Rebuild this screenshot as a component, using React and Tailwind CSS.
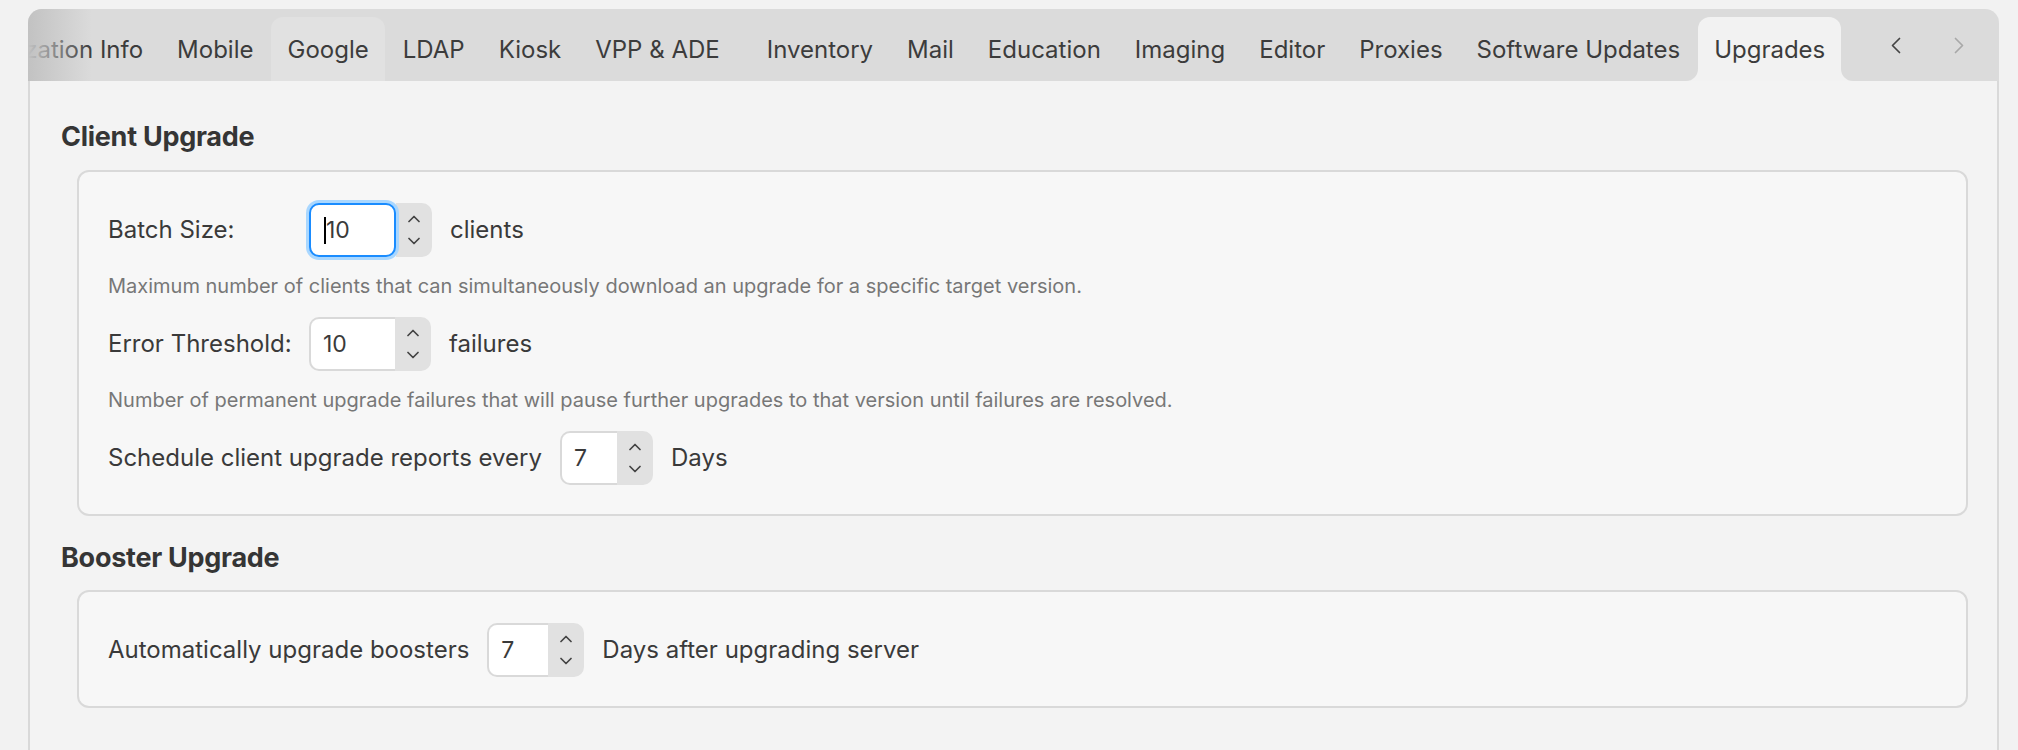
import React from "react";

const TABS = [
  "Organization Info",
  "Mobile",
  "Google",
  "LDAP",
  "Kiosk",
  "VPP & ADE",
  "Inventory",
  "Mail",
  "Education",
  "Imaging",
  "Editor",
  "Proxies",
  "Software Updates",
  "Upgrades",
];

function Chevron({ dir, className }) {
  const d = dir === "up" ? "M1 6.5 6 1.5 11 6.5" : "M1 1.5 6 6.5 11 1.5";
  return (
    <svg width="12" height="8" viewBox="0 0 12 8" fill="none" className={className}>
      <path d={d} stroke="currentColor" strokeWidth="1.7" strokeLinecap="round" strokeLinejoin="round" />
    </svg>
  );
}

function Stepper() {
  return (
    <div className="flex w-[36px] flex-col items-center justify-center gap-[14px] rounded-r-[10px] bg-[#e1e1e1] text-[#444]">
      <Chevron dir="up" />
      <Chevron dir="down" />
    </div>
  );
}

function NumberInput({ value, boxClass, focused }) {
  if (focused) {
    return (
      <div className="flex h-[54px] items-stretch">
        <div className={`relative z-10 flex items-center rounded-[10px] border-2 border-[#1a8cff] bg-white pl-[13px] ring-[3px] ring-[#a9d7ff] ${boxClass}`}>
          <span className="mr-[1px] h-[27px] w-[2px] bg-black" />
          <span className="-ml-[1px] text-[23px] text-[#3a3a3a]">{value}</span>
        </div>
        <Stepper />
      </div>
    );
  }
  return (
    <div className="flex h-[54px] items-stretch">
      <div className={`flex items-center rounded-l-[10px] border-y-2 border-l-2 border-[#d9d9d9] bg-white pl-[12px] text-[23px] text-[#3a3a3a] ${boxClass}`}>
        {value}
      </div>
      <Stepper />
    </div>
  );
}

function TabBar() {
  return (
    <div className="relative flex h-[72px] items-end rounded-t-[14px] bg-[#dbdbdb]">
      <div className="flex-1 self-stretch overflow-hidden rounded-tl-[14px]">
        <div className="ml-[-95px] flex h-full items-end gap-[2px]">
          {TABS.map((t) => {
            const active = t === "Upgrades";
            const hover = t === "Google";
            return (
              <div
                key={t}
                className={`relative flex h-[64px] shrink-0 items-center whitespace-nowrap px-[16px] pt-[2px] text-[24px] text-[#3c3c3c] ${
                  active ? "rounded-t-[12px] bg-[#f2f2f2]" : hover ? "rounded-t-[12px] bg-[#e1e1e1]" : ""
                } ${t === "VPP & ADE" ? "mr-[13px]" : ""}`}
              >
                {t}
                {active && (
                  <>
                    <div className="absolute bottom-0 left-[-12px] h-[12px] w-[12px] bg-[#f2f2f2]">
                      <div className="h-full w-full rounded-br-[12px] bg-[#dbdbdb]" />
                    </div>
                    <div className="absolute bottom-0 right-[-12px] h-[12px] w-[12px] bg-[#f2f2f2]">
                      <div className="h-full w-full rounded-bl-[12px] bg-[#dbdbdb]" />
                    </div>
                  </>
                )}
              </div>
            );
          })}
        </div>
      </div>
      <div className="pointer-events-none absolute left-0 top-0 h-full w-[64px] rounded-tl-[14px] bg-gradient-to-r from-[#c2c2c2] to-[#dbdbdb00]" />
      <div className="flex h-full w-[138px] shrink-0 items-center gap-[53px] pl-[30px]">
        <svg width="10" height="17" viewBox="0 0 10 17" fill="none" className="text-[#444]">
          <path d="M8.5 1.5 1.5 8.5 8.5 15.5" stroke="currentColor" strokeWidth="1.7" strokeLinecap="round" strokeLinejoin="round" />
        </svg>
        <svg width="10" height="17" viewBox="0 0 10 17" fill="none" className="text-[#a8a8a8]">
          <path d="M1.5 1.5 8.5 8.5 1.5 15.5" stroke="currentColor" strokeWidth="1.7" strokeLinecap="round" strokeLinejoin="round" />
        </svg>
      </div>
    </div>
  );
}

function Card({ children }) {
  return (
    <section className="ml-[16px] rounded-[12px] border-2 border-[#d9d9d9] bg-[#f7f7f7] pl-[29px] pr-[29px] pt-[31px] pb-[29px]">
      {children}
    </section>
  );
}

export default function App() {
  return (
    <div className="h-[750px] overflow-hidden bg-[#f2f2f2] pl-[28px] pt-[9px] font-['Inter','Liberation_Sans',sans-serif]">
      <div className="w-[1971px]">
        <TabBar />
        <div className="h-[700px] border-x-2 border-[#d9d9d9] bg-[#f3f3f3] pl-[31px] pr-[29px] pt-[40px]">
          <h2 className="mb-[17px] text-[27px] font-bold leading-[32px] tracking-[-0.01em] text-[#353535]">Client Upgrade</h2>
          <Card>
            <div className="flex h-[54px] items-center text-[24px] text-[#3a3a3a]">
              <span className="w-[201px]">Batch Size:</span>
              <NumberInput value="10" boxClass="w-[87px]" focused />
              <span className="ml-[18px]">clients</span>
            </div>
            <p className="mt-[17px] text-[20px] leading-[24px] text-[#777]">
              Maximum number of clients that can simultaneously download an upgrade for a specific target version.
            </p>
            <div className="mt-[19px] flex h-[54px] items-center text-[24px] text-[#3a3a3a]">
              <span className="w-[201px]">Error Threshold:</span>
              <NumberInput value="10" boxClass="w-[86px]" />
              <span className="ml-[18px]">failures</span>
            </div>
            <p className="mt-[17px] text-[20px] leading-[24px] text-[#777]">
              Number of permanent upgrade failures that will pause further upgrades to that version until failures are resolved.
            </p>
            <div className="mt-[19px] flex h-[54px] items-center gap-[18px] text-[24px] text-[#3a3a3a]">
              <span>Schedule client upgrade reports every</span>
              <NumberInput value="7" boxClass="w-[57px]" />
              <span>Days</span>
            </div>
          </Card>
          <h2 className="mb-[16px] mt-[26px] text-[27px] font-bold leading-[32px] tracking-[-0.01em] text-[#353535]">Booster Upgrade</h2>
          <Card>
            <div className="flex h-[54px] items-center gap-[18px] text-[24px] text-[#3a3a3a]">
              <span>Automatically upgrade boosters</span>
              <NumberInput value="7" boxClass="w-[61px]" />
              <span>Days after upgrading server</span>
            </div>
          </Card>
        </div>
      </div>
    </div>
  );
}
